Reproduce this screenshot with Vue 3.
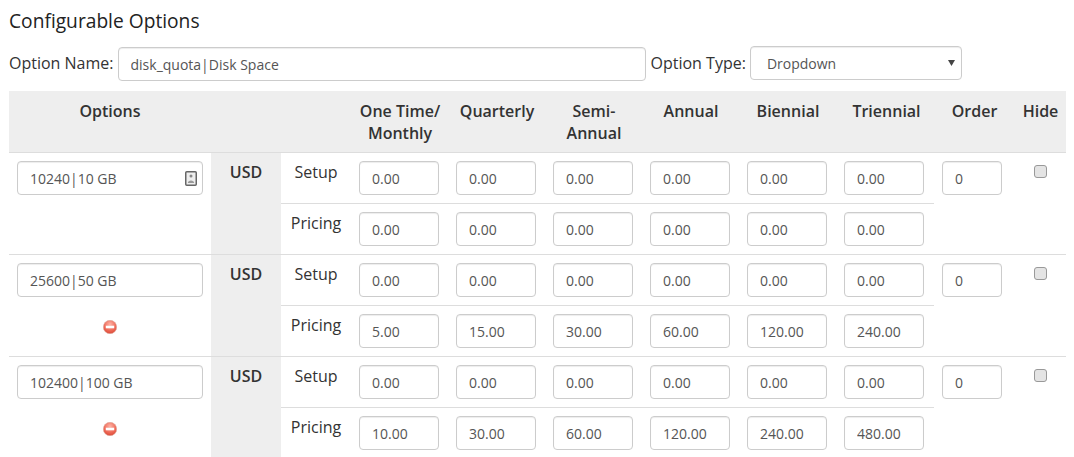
<script setup>
const headers = ['One Time/ Monthly', 'Quarterly', 'Semi-Annual', 'Annual', 'Biennial', 'Triennial']

const options = [
  {
    name: '10240|10 GB',
    setup: ['0.00', '0.00', '0.00', '0.00', '0.00', '0.00'],
    pricing: ['0.00', '0.00', '0.00', '0.00', '0.00', '0.00'],
    first: true
  },
  {
    name: '25600|50 GB',
    setup: ['0.00', '0.00', '0.00', '0.00', '0.00', '0.00'],
    pricing: ['5.00', '15.00', '30.00', '60.00', '120.00', '240.00']
  },
  {
    name: '102400|100 GB',
    setup: ['0.00', '0.00', '0.00', '0.00', '0.00', '0.00'],
    pricing: ['10.00', '30.00', '60.00', '120.00', '240.00', '480.00']
  }
]
</script>

<template>
  <div class="page">
    <h2 class="title">Configurable Options</h2>

    <div class="form-row">
      <label class="form-label">Option Name:</label>
      <input class="field name-field" type="text" value="disk_quota|Disk Space" />
      <label class="form-label">Option Type:</label>
      <div class="select-box">
        <span>Dropdown</span>
        <svg class="select-arrow" width="7" height="6" viewBox="0 0 7 6">
          <path d="M0 0h7L3.5 6z" fill="#444" />
        </svg>
      </div>
    </div>

    <div class="grid head">
      <div class="th">Options</div>
      <div class="th"></div>
      <div class="th"></div>
      <div v-for="h in headers" :key="h" class="th price-head">{{ h }}</div>
      <div class="th shifted">Order</div>
      <div class="th shifted">Hide</div>
    </div>

    <div v-for="(opt, n) in options" :key="opt.name" class="grid group">
      <div class="name-cell">
        <div class="name-wrap">
          <input class="field" type="text" :value="opt.name" />
          <svg v-if="opt.first" class="autofill" width="12" height="15" viewBox="0 0 12 15">
            <rect x="0.75" y="0.75" width="10.5" height="13.5" rx="1" fill="#eee" stroke="#666" stroke-width="1.5" />
            <circle cx="6" cy="5" r="1.5" fill="#888" />
            <path d="M2.8 12c0-3.4 6.4-3.4 6.4 0z" fill="#999" />
          </svg>
        </div>
        <svg v-if="!opt.first" class="remove" width="14" height="14" viewBox="0 0 14 14">
          <defs>
            <radialGradient :id="'red' + n" cx="50%" cy="30%" r="75%">
              <stop offset="0" stop-color="#ffb3a6" />
              <stop offset="0.6" stop-color="#ee6a58" />
              <stop offset="1" stop-color="#d9432f" />
            </radialGradient>
          </defs>
          <circle cx="7" cy="7" r="6.7" :fill="'url(#red' + n + ')'" stroke="#dca89c" stroke-width="0.6" />
          <rect x="2.8" y="5.7" width="8.4" height="2.6" fill="#fff" />
        </svg>
      </div>
      <div class="currency">USD</div>

      <div class="cycle line">Setup</div>
      <div v-for="(v, i) in opt.setup" :key="'s' + i" class="price-cell line">
        <input class="field" type="text" :value="v" />
      </div>

      <div class="order-cell">
        <input class="field" type="text" value="0" />
      </div>
      <div class="hide-cell">
        <input class="check" type="checkbox" />
      </div>

      <div class="cycle">Pricing</div>
      <div v-for="(v, i) in opt.pricing" :key="'p' + i" class="price-cell">
        <input class="field" type="text" :value="v" />
      </div>
    </div>
  </div>
</template>

<style scoped>
.page {
  height: 457px;
  overflow: hidden;
  box-sizing: border-box;
  padding: 9px 8px 0 9px;
  font-family: "Open Sans", "Liberation Sans", sans-serif;
  font-size: 16px;
  color: #333;
}

.title {
  margin: 0 0 13px;
  font-size: 19.2px;
  font-weight: 400;
  line-height: 24px;
  color: #222;
}

.form-row {
  display: flex;
  align-items: flex-start;
  height: 35px;
  margin-bottom: 10px;
}

.form-label {
  flex: none;
  line-height: 34px;
  margin-right: 4px;
  white-space: nowrap;
}

.field {
  display: block;
  box-sizing: border-box;
  width: 100%;
  height: 34px;
  padding: 6px 12px;
  border: 1px solid #ccc;
  border-radius: 4px;
  background: #fff;
  box-shadow: inset 0 1px 1px rgba(0, 0, 0, 0.075);
  font-family: inherit;
  font-size: 14px;
  color: #555;
  outline: none;
}

.name-field {
  flex: none;
  width: 528px;
  margin: 1px 5px 0 0;
}

.select-box {
  flex: none;
  position: relative;
  box-sizing: border-box;
  width: 212px;
  height: 34px;
  padding-left: 16px;
  border: 1px solid #ccc;
  border-radius: 4px;
  box-shadow: inset 0 1px 1px rgba(0, 0, 0, 0.075);
  font-size: 14px;
  line-height: 33px;
  color: #555;
}

.select-arrow {
  position: absolute;
  right: 6px;
  top: 13px;
}

.grid {
  display: grid;
  grid-template-columns: 202px 70px 68px repeat(5, 97px) 100px 78px 54px;
  width: 1057px;
}

.head {
  height: 61px;
  background: #eee;
  border-bottom: 1px solid #ddd;
}

.th {
  padding-top: 9px;
  font-weight: 600;
  line-height: 22px;
  text-align: center;
}

.price-head {
  padding-left: 5px;
}

.shifted {
  padding-left: 3px;
}

.group {
  grid-template-rows: 51px 50px;
  border-bottom: 1px solid #ddd;
}

.name-cell {
  grid-row: 1 / span 2;
  padding: 8px 8px 0;
}

.name-wrap {
  position: relative;
}

.autofill {
  position: absolute;
  right: 6px;
  top: 10px;
}

.remove {
  display: block;
  margin: 23px auto 0;
}

.currency {
  grid-row: 1 / span 2;
  padding-top: 8px;
  background: #eee;
  font-weight: 600;
  line-height: 22px;
  text-align: center;
}

.cycle {
  padding: 8px 0 0 2px;
  line-height: 22px;
  text-align: center;
}

.line {
  border-bottom: 1px solid #ddd;
}

.price-cell {
  padding: 8px 0 0 10px;
}

.price-cell .field {
  width: 80px;
}

.order-cell {
  grid-column: 10;
  grid-row: 1 / span 2;
  padding: 8px 10px 0 8px;
}

.hide-cell {
  grid-column: 11;
  grid-row: 1 / span 2;
  padding: 12px 0 0 2px;
  text-align: center;
}

.check {
  display: block;
  appearance: none;
  box-sizing: border-box;
  width: 13px;
  height: 13px;
  margin: 0 auto;
  border: 1px solid #999;
  border-radius: 3px;
  background: #e4e4e4;
}
</style>

<style>
html,
body {
  overflow: hidden;
}
</style>
